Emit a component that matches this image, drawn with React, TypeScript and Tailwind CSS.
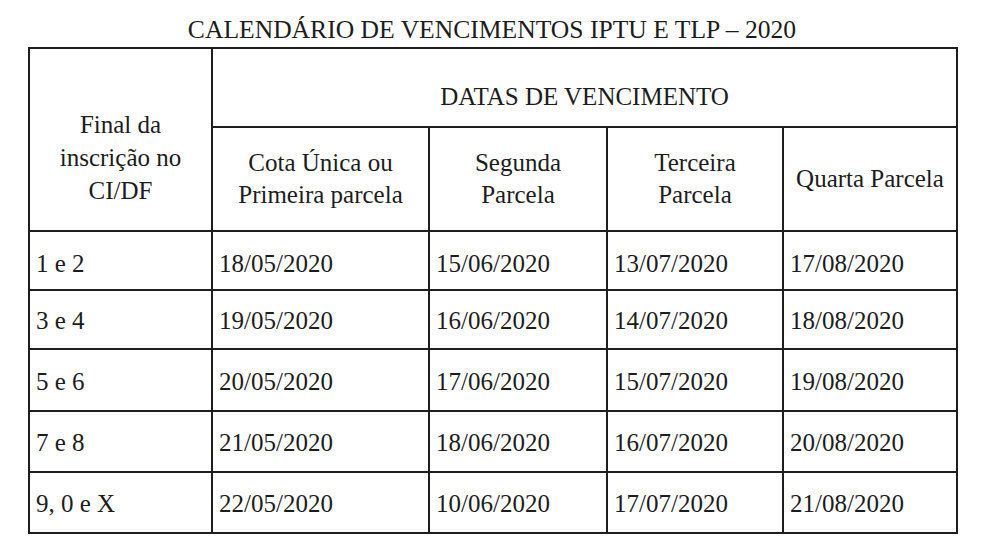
import React from "react";

const rows: { label: string; dates: string[]; pad: string }[] = [
  { label: "1 e 2", dates: ["18/05/2020", "15/06/2020", "13/07/2020", "17/08/2020"], pad: "pt-[18px]" },
  { label: "3 e 4", dates: ["19/05/2020", "16/06/2020", "14/07/2020", "18/08/2020"], pad: "pt-[16px]" },
  { label: "5 e 6", dates: ["20/05/2020", "17/06/2020", "15/07/2020", "19/08/2020"], pad: "pt-[18px]" },
  { label: "7 e 8", dates: ["21/05/2020", "18/06/2020", "16/07/2020", "20/08/2020"], pad: "pt-[17px]" },
  { label: "9, 0 e X", dates: ["22/05/2020", "10/06/2020", "17/07/2020", "21/08/2020"], pad: "pt-[17px]" },
];

export default function App() {
  return (
    <div
      className="w-[984px] h-[560px] bg-white text-[#1c1c1c] text-[25px] leading-[28px]"
      style={{ fontFamily: '"Liberation Serif", "Times New Roman", serif' }}
    >
      <div className="h-[47px] pt-[16px] text-center text-[25.6px]">
        CALENDÁRIO DE VENCIMENTOS IPTU E TLP – 2020
      </div>
      <div className="ml-[28px] w-[930px] bg-[#1e1e1e] p-[2px]">
        <div className="grid grid-cols-[181px_215px_176px_174px_172px] grid-rows-[77px_102px_57px_57px_60px_59px_59px] gap-[2px]">
          <div className="row-span-2 bg-white pt-[59px] text-center leading-[33px]">
            Final da
            <br />
            inscrição no
            <br />
            CI/DF
          </div>
          <div className="col-span-4 bg-white pt-[34px] text-center">DATAS DE VENCIMENTO</div>
          <div className="bg-white flex items-center justify-center text-center leading-[32px]">
            Cota Única ou
            <br />
            Primeira parcela
          </div>
          <div className="bg-white flex items-center justify-center text-center leading-[32px]">
            Segunda
            <br />
            Parcela
          </div>
          <div className="bg-white flex items-center justify-center text-center leading-[32px]">
            Terceira
            <br />
            Parcela
          </div>
          <div className="bg-white flex items-center justify-center text-center leading-[32px]">
            Quarta Parcela
          </div>
          {rows.map((r) => (
            <React.Fragment key={r.label}>
              <div className={`bg-white pl-[6px] ${r.pad}`}>{r.label}</div>
              {r.dates.map((d, i) => (
                <div key={i} className={`bg-white pl-[6px] ${r.pad}`}>
                  {d}
                </div>
              ))}
            </React.Fragment>
          ))}
        </div>
      </div>
    </div>
  );
}
